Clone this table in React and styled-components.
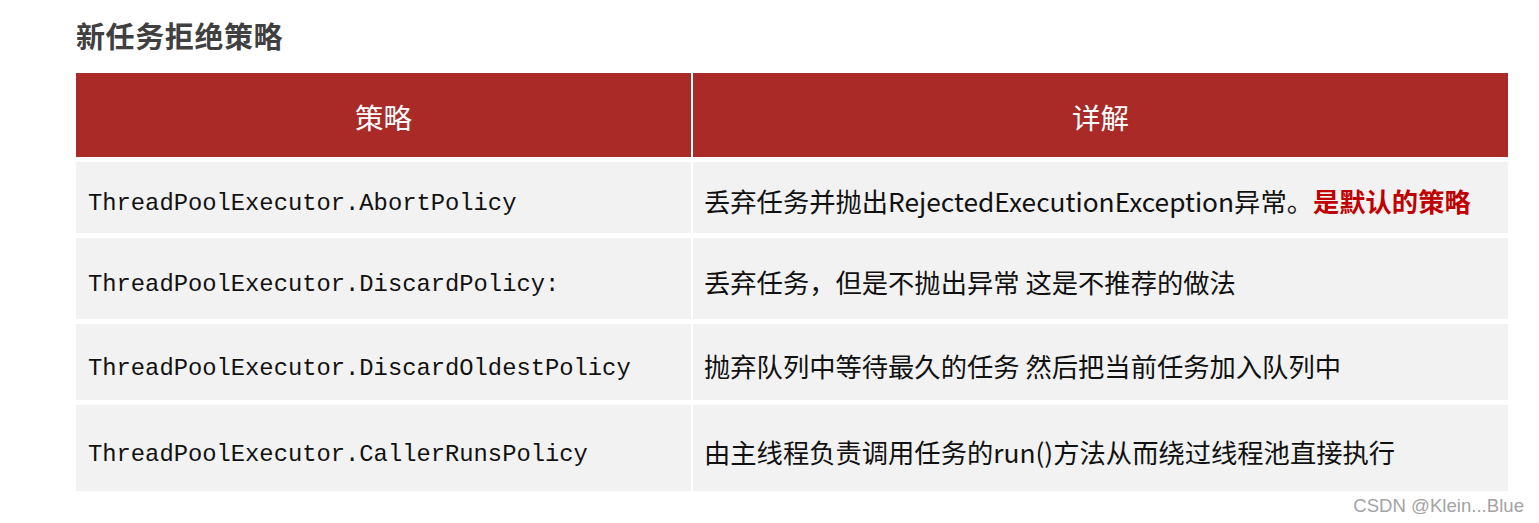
import styled, { createGlobalStyle } from "styled-components";

const GlobalStyle = createGlobalStyle`
    body {
        margin: 0;
        background: #ffffff;
        font-family: "Noto Sans CJK SC", "Noto Sans", sans-serif;
    }
`

const Page = styled.div`
    width: 1539px;
    height: 523px;
    padding-left: 76px;
    box-sizing: border-box;
    display: flex;
    flex-direction: column;
`

const Title = styled.h2`
    margin: 15px 0 18px;
    font-size: 29px;
    line-height: 40px;
    font-weight: 700;
    color: #404040;
    letter-spacing: 0.6px;
`

const Table = styled.div`
    display: grid;
    width: 1432px;
    grid-template-columns: 615px 815px;
    grid-template-rows: 84px 71px 81px 76px 86px;
    column-gap: 2px;
    row-gap: 5px;
`

const HeadCell = styled.div`
    background-color: #a92a27;
    color: #ffffff;
    font-size: 28.5px;
    display: flex;
    align-items: center;
    justify-content: center;
    padding-top: 2px;
`

const Cell = styled.div`
    background-color: #f2f2f2;
    display: flex;
    align-items: center;
    padding-left: ${props => props.mono ? "12px" : "11px"};
    padding-top: ${props => props.mono ? "12px" : "6px"};
    font-family: ${props => props.mono
        ? `"Liberation Mono", "DejaVu Sans Mono", monospace`
        : `"Noto Sans CJK SC", "Noto Sans", sans-serif`};
    font-size: ${props => props.mono ? "23.8px" : "26.3px"};
    color: #111111;
    white-space: nowrap;
`

const Strong = styled.span`
    color: #c00000;
    font-weight: 700;
`

const Footer = styled.div`
    display: flex;
    justify-content: flex-end;
    padding-right: 15px;
    margin-top: 4px;
`

const Watermark = styled.span`
    font-family: "Liberation Sans", Arial, sans-serif;
    font-size: 18.6px;
    color: #a3a3a3;
`

const rows = [
    {
        policy: "ThreadPoolExecutor.AbortPolicy",
        detail: <>丢弃任务并抛出RejectedExecutionException异常。<Strong>是默认的策略</Strong></>,
    },
    { policy: "ThreadPoolExecutor.DiscardPolicy:", detail: "丢弃任务，但是不抛出异常 这是不推荐的做法" },
    { policy: "ThreadPoolExecutor.DiscardOldestPolicy", detail: "抛弃队列中等待最久的任务 然后把当前任务加入队列中" },
    { policy: "ThreadPoolExecutor.CallerRunsPolicy", detail: "由主线程负责调用任务的run()方法从而绕过线程池直接执行" },
]

export default function App() {
    return (
        <>
            <GlobalStyle />
            <Page>
                <Title>新任务拒绝策略</Title>
                <Table>
                    <HeadCell>策略</HeadCell>
                    <HeadCell>详解</HeadCell>
                    {rows.map(r => [
                        <Cell mono key={r.policy + "-p"}>{r.policy}</Cell>,
                        <Cell key={r.policy + "-d"}>{r.detail}</Cell>,
                    ])}
                </Table>
                <Footer>
                    <Watermark>CSDN @Klein...Blue</Watermark>
                </Footer>
            </Page>
        </>
    )
}
